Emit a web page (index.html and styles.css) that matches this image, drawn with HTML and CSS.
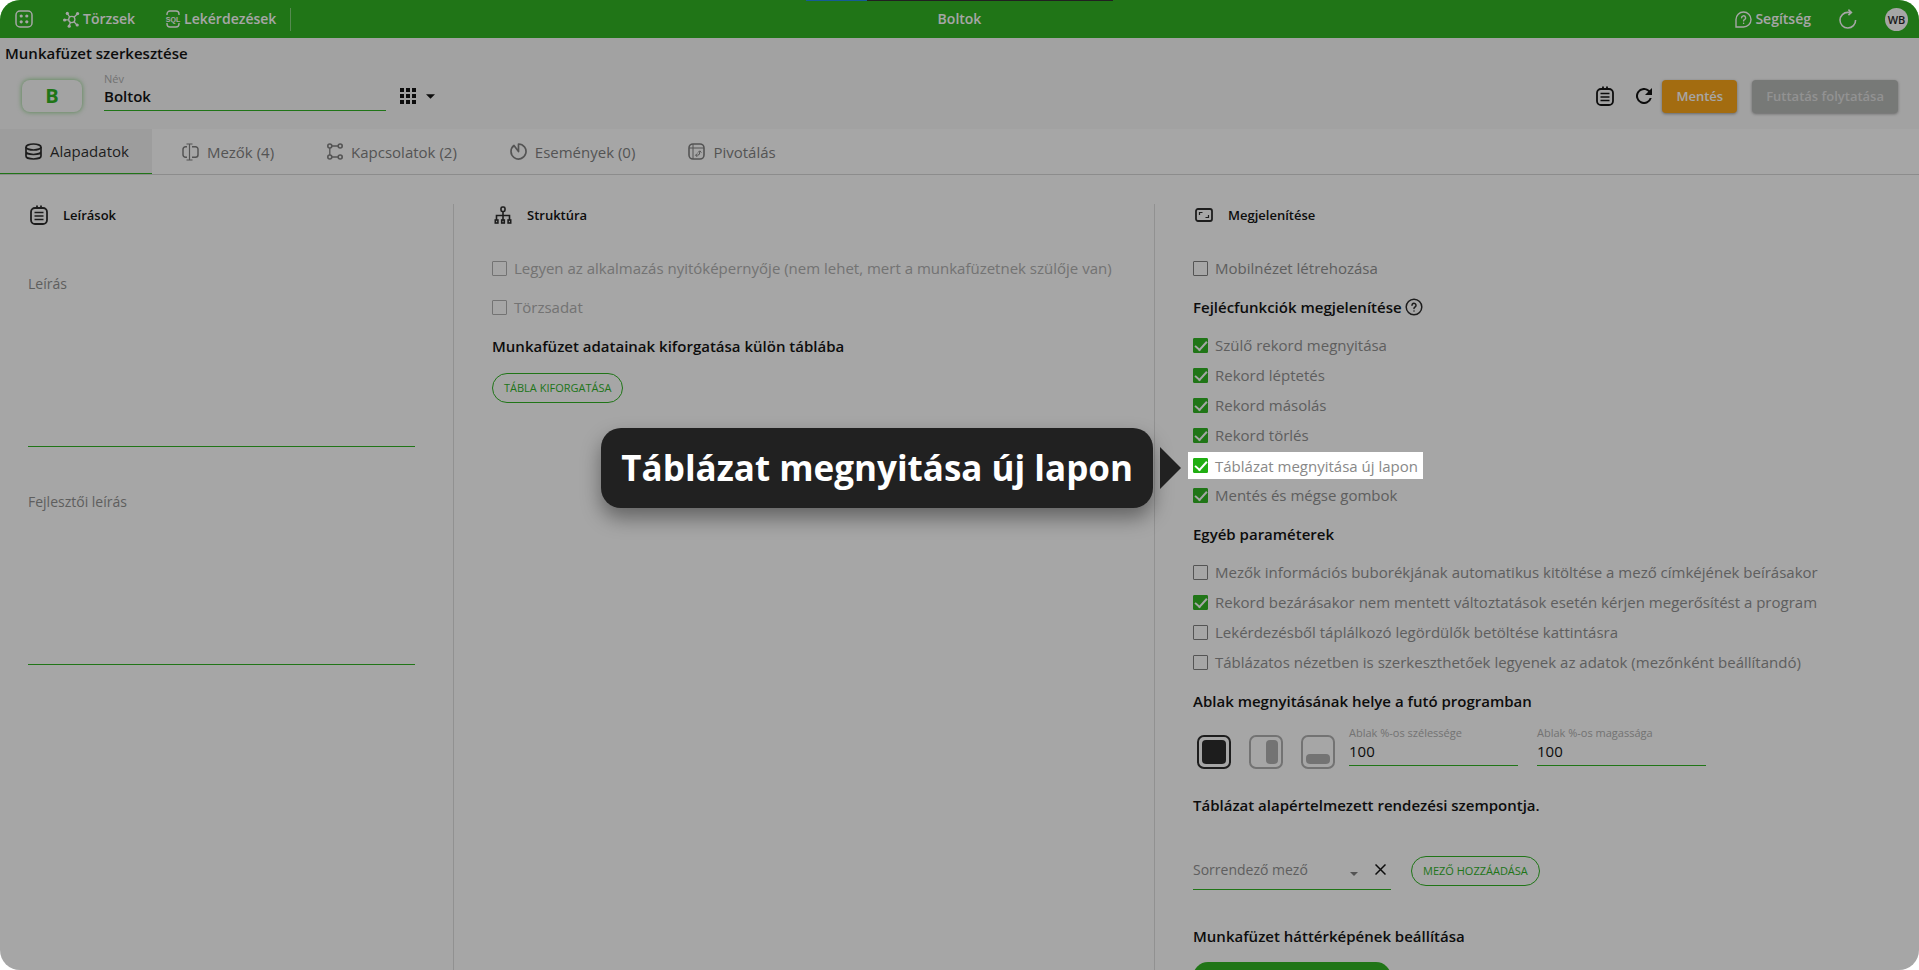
FILE: index.html
```html
<!DOCTYPE html>
<html lang="hu">
<head>
<meta charset="utf-8">
<title>Boltok</title>
<link rel="stylesheet" href="styles.css">
</head>
<body>
<div class="app">
  <header class="topbar">
    <nav class="topbar-nav">
      <a class="nav-link nav-apps" href="#" aria-label="Alkalmazások">
        <svg width="18" height="18" viewBox="0 0 18 18" fill="none" stroke="currentColor" stroke-width="1.5"><rect x="1" y="1" width="16" height="16" rx="4"/><g fill="currentColor" stroke="none"><circle cx="6.2" cy="6" r="1.6"/><circle cx="11.8" cy="6" r="1.6"/><circle cx="6.2" cy="11.8" r="1.6"/><circle cx="11.8" cy="11.8" r="1.6"/></g></svg>
      </a>
      <a class="nav-link nav-master" href="#">
        <svg width="17" height="17" viewBox="0 0 17 17" fill="none" stroke="currentColor" stroke-width="1.3"><circle cx="8.8" cy="8.5" r="3.1"/><path d="M11 6.2l3-3M11 10.8l2.6 2.8M7.5 11.3l-1.1 3M5.7 8.8H2M6.8 6.2L4.6 3"/><g fill="currentColor" stroke="none"><circle cx="14.6" cy="2.6" r="1.6"/><circle cx="14.2" cy="14" r="1.6"/><circle cx="6.2" cy="15.2" r="1.6"/><circle cx="1.6" cy="9" r="1.6"/><circle cx="4.3" cy="2.4" r="1.6"/></g></svg>
        Törzsek
      </a>
      <a class="nav-link nav-query" href="#">
        <svg width="16" height="18" viewBox="0 0 16 18" fill="none" stroke="currentColor" stroke-width="1.4"><path d="M2 5V4a3 3 0 0 1 3-3h6a3 3 0 0 1 3 3v1M2 13v1a3 3 0 0 0 3 3h6a3 3 0 0 0 3-3v-1"/><text class="svg-sql" x="8" y="11.6" text-anchor="middle">SQL</text></svg>
        Lekérdezések
      </a>
    </nav>
    <h1 class="topbar-title">Boltok</h1>
    <div class="topbar-tools">
      <a class="nav-link" href="#">
        <svg width="17" height="17" viewBox="0 0 17 17" fill="none" stroke="currentColor" stroke-width="1.4" stroke-linecap="round"><path d="M1 16V8.5A7.5 7.5 0 1 1 8.5 16Z"/><path d="M6.6 6.8a2 2 0 1 1 2.9 1.8q-.9.4-.9 1.3M8.6 12.3v.1"/></svg>
        Segítség
      </a>
      <button class="icon-button" type="button" aria-label="Frissítés">
        <svg width="18" height="20" viewBox="0 0 18 20" fill="none" stroke="currentColor" stroke-width="1.6"><path d="M16.6 11A7.8 7.8 0 1 1 9 3.400h3M9.400.6l3 2.800-3 2.800"/></svg>
      </button>
      <span class="avatar">WB</span>
    </div>
    <div class="progress"><span class="progress-bar"></span></div>
  </header>

  <section class="editor-head">
    <h2 class="editor-title">Munkafüzet szerkesztése</h2>
    <div class="editor-row">
      <span class="badge">B</span>
      <div class="field name-field">
        <label for="name">Név</label>
        <input id="name" type="text" value="Boltok">
      </div>
      <button class="icon-button grid-button" type="button" aria-label="Ikon választása">
        <svg width="16" height="16" viewBox="0 0 16 16" fill="currentColor"><path d="M0 0h4v4H0zM6 0h4v4H6zM12 0h4v4h-4zM0 6h4v4H0zM6 6h4v4H6zM12 6h4v4h-4zM0 12h4v4H0zM6 12h4v4H6zM12 12h4v4h-4z"/></svg>
        <svg width="9" height="5" viewBox="0 0 10 5" fill="currentColor"><path d="M0 0h10L5 5z"/></svg>
      </button>
      <div class="editor-actions">
        <button class="icon-button" type="button" aria-label="Napló">
          <svg width="18" height="20" viewBox="0 0 18 20" fill="none" stroke="currentColor" stroke-width="1.8"><rect x="1" y="3" width="16" height="16" rx="4"/><path d="M4.500 7.500h9M4.500 11h9M4.500 14.500h9" stroke-width="1.400"/><path d="M7 4V.6M11 4V.6"/></svg>
        </button>
        <button class="icon-button" type="button" aria-label="Újratöltés">
          <svg width="16" height="16" viewBox="0 0 16 16"><path fill="currentColor" d="M13.650 2.350A8 8 0 1 0 15.730 10h-2.080A6 6 0 1 1 8 2c1.660 0 3.140.69 4.220 1.780L9 7h7V0z"/></svg>
        </button>
        <button class="button save" type="button">Mentés</button>
        <button class="button resume" type="button" disabled>Futtatás folytatása</button>
      </div>
    </div>
  </section>

  <nav class="tabs">
    <a class="tab active" href="#">
      <svg width="17" height="17" viewBox="0 0 17 17" fill="none" stroke="currentColor" stroke-width="1.7"><ellipse cx="8.5" cy="4" rx="7.5" ry="3"/><path d="M1 4v9c0 1.700 3.400 3 7.500 3s7.500-1.300 7.500-3V4M1 8.500c0 1.700 3.400 3 7.500 3s7.500-1.300 7.500-3"/></svg>
      Alapadatok
    </a>
    <a class="tab" href="#">
      <svg width="17" height="18" viewBox="0 0 17 18" fill="none" stroke="currentColor" stroke-width="1.500"><path d="M5 3.800H3.500A2.500 2.500 0 0 0 1 6.300v5.400a2.500 2.500 0 0 0 2.500 2.500H5M10 3.800h3.500A2.500 2.500 0 0 1 16 6.300v5.400a2.500 2.500 0 0 1-2.500 2.500H10"/><path d="M7.500 1v16M4.500 1h6M4.500 17h6" stroke-width="1.200"/></svg>
      Mezők (4)
    </a>
    <a class="tab" href="#">
      <svg width="16" height="17" viewBox="0 0 16 17" fill="none" stroke="currentColor" stroke-width="1.600"><circle cx="2.800" cy="3" r="2"/><circle cx="13.200" cy="3" r="2"/><circle cx="2.800" cy="14" r="2"/><circle cx="13.200" cy="14" r="2"/><path d="M4.800 3h6.400M4.800 14h6.400M2.800 5v7" stroke-width="1.300"/></svg>
      Kapcsolatok (2)
    </a>
    <a class="tab" href="#">
      <svg width="17" height="17" viewBox="0 0 17 17" fill="none" stroke="currentColor" stroke-width="1.700" stroke-linejoin="round"><path d="M8.500 8.500V1A7.500 7.500 0 1 1 4 2.500Z"/></svg>
      Események (0)
    </a>
    <a class="tab" href="#">
      <svg width="17" height="17" viewBox="0 0 17 17" fill="none" stroke="currentColor" stroke-width="1.600"><rect x="1" y="1" width="15" height="15" rx="4"/><path d="M1 5h15M5 1v15M8 12.200h1.500q2.200 0 2.200-2.200V8.300M10 9.500l1.700-1.700 1.700 1.700M9.200 10.500l-1.700 1.700 1.700 1.700" stroke-width="1"/></svg>
      Pivotálás
    </a>
  </nav>

  <main class="columns">
    <section class="column column-text">
      <h3 class="column-title">
        <svg width="18" height="20" viewBox="0 0 18 20" fill="none" stroke="currentColor" stroke-width="1.800"><rect x="1" y="3" width="16" height="16" rx="4"/><path d="M4.500 7.500h9M4.500 11h9M4.500 14.500h9" stroke-width="1.500"/><path d="M7 4V.6M11 4V.6"/></svg>
        Leírások
      </h3>
      <div class="note">
        <label for="desc">Leírás</label>
        <textarea id="desc"></textarea>
      </div>
      <div class="note">
        <label for="devdesc">Fejlesztői leírás</label>
        <textarea id="devdesc"></textarea>
      </div>
    </section>

    <section class="column">
      <h3 class="column-title">
        <svg width="18" height="18" viewBox="0 0 18 18" fill="none" stroke="currentColor" stroke-width="1.600"><rect x="7" y="1" width="4" height="4.500" rx="1.500"/><path d="M9 5.500v9M2.500 14V9.500h13V14"/><rect x="1.300" y="14" width="2.600" height="3"/><rect x="7.700" y="14" width="2.600" height="3"/><rect x="14.100" y="14" width="2.600" height="3"/></svg>
        Struktúra
      </h3>
      <div class="group">
        <label class="check disabled"><input type="checkbox" disabled>Legyen az alkalmazás nyitóképernyője (nem lehet, mert a munkafüzetnek szülője van)</label>
      </div>
      <div class="group">
        <label class="check disabled"><input type="checkbox" disabled>Törzsadat</label>
      </div>
      <h4 class="group-title">Munkafüzet adatainak kiforgatása külön táblába</h4>
      <button class="pill" type="button">TÁBLA KIFORGATÁSA</button>
    </section>

    <section class="column column-view">
      <h3 class="column-title">
        <svg width="18" height="14" viewBox="0 0 18 14" fill="none" stroke="currentColor" stroke-width="1.800"><rect x="1" y="1" width="16" height="12" rx="2"/><path d="M4.500 7V4.500H7.500M13.500 7v2.500h-3" stroke-width="1.200"/></svg>
        Megjelenítése
      </h3>
      <div class="group">
        <label class="check"><input type="checkbox">Mobilnézet létrehozása</label>
      </div>
      <h4 class="group-title">Fejlécfunkciók megjelenítése
        <svg width="18" height="18" viewBox="0 0 18 18" fill="none" stroke="currentColor" stroke-width="1.500" stroke-linecap="round"><circle cx="9" cy="9" r="7.800"/><path d="M7 7.200a2 2 0 1 1 3 1.800q-1 .5-1 1.500M9 13v.1"/></svg>
      </h4>
      <div class="checks">
        <label class="check"><input type="checkbox" checked>Szülő rekord megnyitása</label>
        <label class="check"><input type="checkbox" checked>Rekord léptetés</label>
        <label class="check"><input type="checkbox" checked>Rekord másolás</label>
        <label class="check"><input type="checkbox" checked>Rekord törlés</label>
        <div class="spotlight">
          <label class="check"><input type="checkbox" checked>Táblázat megnyitása új lapon</label>
          <div class="callout" role="tooltip">Táblázat megnyitása új lapon</div>
        </div>
        <label class="check"><input type="checkbox" checked>Mentés és mégse gombok</label>
      </div>
      <h4 class="group-title">Egyéb paraméterek</h4>
      <div class="checks">
        <label class="check"><input type="checkbox">Mezők információs buborékjának automatikus kitöltése a mező címkéjének beírásakor</label>
        <label class="check"><input type="checkbox" checked>Rekord bezárásakor nem mentett változtatások esetén kérjen megerősítést a program</label>
        <label class="check"><input type="checkbox">Lekérdezésből táplálkozó legördülők betöltése kattintásra</label>
        <label class="check"><input type="checkbox">Táblázatos nézetben is szerkeszthetőek legyenek az adatok (mezőnként beállítandó)</label>
      </div>
      <h4 class="group-title">Ablak megnyitásának helye a futó programban</h4>
      <div class="window-row">
        <div class="window-modes">
          <button class="icon-button" type="button" aria-label="Teljes ablak">
            <svg width="34" height="34" viewBox="0 0 34 34"><rect x="1" y="1" width="32" height="32" rx="6" fill="none" stroke="currentColor" stroke-width="2"/><rect x="5" y="5" width="24" height="24" rx="4" fill="currentColor"/></svg>
          </button>
          <button class="icon-button muted" type="button" aria-label="Jobb oldali panel">
            <svg width="34" height="34" viewBox="0 0 34 34"><rect x="1" y="1" width="32" height="32" rx="6" fill="none" stroke="currentColor" stroke-width="2"/><rect x="17" y="5" width="12" height="24" rx="4" fill="currentColor"/></svg>
          </button>
          <button class="icon-button muted" type="button" aria-label="Alsó panel">
            <svg width="34" height="34" viewBox="0 0 34 34"><rect x="1" y="1" width="32" height="32" rx="6" fill="none" stroke="currentColor" stroke-width="2"/><rect x="5" y="19" width="24" height="10" rx="4" fill="currentColor"/></svg>
          </button>
        </div>
        <div class="field size-field">
          <label for="w">Ablak %-os szélessége</label>
          <input id="w" type="text" value="100">
        </div>
        <div class="field size-field">
          <label for="h">Ablak %-os magassága</label>
          <input id="h" type="text" value="100">
        </div>
      </div>
      <h4 class="group-title">Táblázat alapértelmezett rendezési szempontja.</h4>
      <div class="sort-row">
        <div class="sort-field">
          <select aria-label="Sorrendező mező"><option>Sorrendező mező</option></select>
          <svg class="caret" width="8" height="4" viewBox="0 0 8 4" fill="currentColor"><path d="M0 0h8L4 4z"/></svg>
          <button class="icon-button" type="button" aria-label="Törlés">
            <svg width="11" height="11" viewBox="0 0 11 11" fill="none" stroke="currentColor" stroke-width="1.500"><path d="M.5.5l10 10M10.500.5l-10 10"/></svg>
          </button>
        </div>
        <button class="pill" type="button">MEZŐ HOZZÁADÁSA</button>
      </div>
      <h4 class="group-title">Munkafüzet háttérképének beállítása</h4>
      <button class="upload" type="button" aria-label="Háttérkép feltöltése"></button>
    </section>
  </main>
</div>
</body>
</html>
```
FILE: styles.css
```css
:root {
  --green: #20ae12;
  --ink: #000;
  --icon: #1c1c1c;
  --text: #888;
  --line: #ddd;
  --font: "Open Sans", "Noto Sans", sans-serif;
}

* { box-sizing: border-box; }

body {
  margin: 0;
  background: #fff;
  font: 14px/20px var(--font);
  color: var(--ink);
}

h1, h2, h3, h4 { margin: 0; }
a { color: inherit; text-decoration: none; }
svg { flex: none; display: block; }
button, input, select, textarea { font: inherit; color: inherit; }

.app {
  height: 100vh;
  overflow: hidden;
  border-radius: 20px;
  background: #fff;
}

/* Top bar */
.topbar {
  position: relative;
  display: grid;
  grid-template-columns: 1fr auto 1fr;
  align-items: center;
  height: 38px;
  background: var(--green);
  color: #fff;
}
.topbar-nav { display: flex; align-items: center; padding-left: 15px; }
.nav-link {
  display: flex;
  align-items: center;
  gap: 3px;
  font-size: 14px;
  font-weight: 600;
}
.nav-master { margin-left: 30px; }
.nav-query {
  height: 23px;
  margin-left: 30px;
  padding-right: 14px;
  border-right: 1px solid #7bd071;
}
.svg-sql { font: 700 7px "Liberation Sans", sans-serif; fill: currentColor; stroke: none; }
.topbar-title { font-size: 14px; font-weight: 600; }
.topbar-tools {
  display: flex;
  align-items: center;
  justify-content: flex-end;
  gap: 28px;
  padding-right: 11px;
}
.avatar {
  width: 23px;
  border-radius: 50%;
  background: #fff;
  color: #111;
  font-size: 11px;
  font-weight: 600;
  line-height: 23px;
  text-align: center;
}
.progress {
  position: absolute;
  top: 0;
  left: 42%;
  width: 16%;
  height: 1px;
  background: #222;
}
.progress-bar { display: block; width: 20%; height: 1px; background: #1082e4; }

.icon-button {
  display: flex;
  align-items: center;
  padding: 0;
  border: 0;
  background: none;
}

/* Editor header */
.editor-head { padding: 5px 21px 0 22px; background: #f8f8f8; }
.editor-title { margin-left: -17px; font-size: 15px; font-weight: 600; }
.editor-row { display: flex; align-items: center; height: 66px; }
.badge {
  width: 60px;
  height: 32px;
  border-radius: 8px;
  background: #fafafa;
  box-shadow: 0 0 5px rgba(32, 174, 18, .6);
  color: var(--green);
  font-size: 20px;
  font-weight: 700;
  line-height: 32px;
  text-align: center;
}
.field { display: flex; flex-direction: column; border-bottom: 1px solid var(--green); }
.field label { color: #aaa; font-size: 11px; line-height: 14px; }
.field input { width: 100%; padding: 0; border: 0; background: none; outline: 0; }
.name-field { width: 282px; height: 39px; margin: 0 0 10px 22px; }
.name-field input { height: 20px; font-size: 15px; font-weight: 600; }
.grid-button { gap: 10px; margin-left: 14px; }
.editor-actions { display: flex; align-items: center; gap: 15px; margin-left: auto; }
.editor-actions .icon-button:first-child { margin-right: 7px; }
.editor-actions .save { margin-left: -5px; }
.button {
  height: 33px;
  padding: 0 14px;
  border: 0;
  border-radius: 4px;
  box-shadow: 0 1px 3px rgba(0, 0, 0, .4);
  color: #fff;
  font-size: 13px;
  font-weight: 600;
}
.save { background: #fb9e05; }
.resume { background: #b1b4b1; color: #dedede; }

/* Tabs */
.tabs { display: flex; height: 46px; border-bottom: 1px solid #d4d4d4; }
.tab {
  display: flex;
  align-items: center;
  gap: 8px;
  padding: 0 23px 0 30px;
  color: #777;
  font-size: 15px;
}
.tab.active {
  padding-left: 25px;
  background: #f1f1f1;
  border-bottom: 1px solid var(--green);
  color: var(--icon);
}

/* Columns */
.columns { display: grid; grid-template-columns: 453fr 701fr 765fr; padding-top: 29px; }
.column { min-height: calc(100vh - 204px); padding-left: 38px; }
.column + .column { border-left: 1px solid var(--line); }
.column-text { padding: 0 38px 0 28px; }
.column-title {
  display: flex;
  align-items: center;
  gap: 15px;
  height: 22px;
  margin-bottom: 27px;
  padding-left: 2px;
  font-size: 13px;
  font-weight: 600;
}
.column-title svg { color: var(--icon); }

.note {
  display: flex;
  flex-direction: column;
  height: 173px;
  margin: 45px 0;
  border-bottom: 1px solid var(--green);
  color: var(--text);
}
.column-text .column-title { margin-bottom: 48px; }
.note textarea { flex: 1; border: 0; outline: 0; resize: none; background: none; }

.group { display: flex; margin-bottom: 9px; }
.checks { display: flex; flex-direction: column; align-items: flex-start; margin: 8px 0 9px; }
.check {
  display: flex;
  align-items: center;
  gap: 7px;
  min-height: 30px;
  color: var(--text);
  font-size: 15px;
  white-space: nowrap;
}
.check input {
  appearance: none;
  flex: none;
  display: grid;
  place-items: center;
  width: 15px;
  height: 15px;
  margin: 0;
  border: 1px solid #777;
  border-radius: 1px;
}
.check input:checked { border-color: var(--green); background: var(--green); }
.check input:checked::before {
  content: "";
  width: 10px;
  height: 5px;
  border: solid #fff;
  border-width: 0 0 2px 2px;
  transform: translateY(-1px) rotate(-48deg);
}
.check.disabled { color: #aaa; }
.check.disabled input { border-color: #aaa; }

.group-title {
  display: flex;
  align-items: center;
  gap: 3px;
  min-height: 30px;
  font-size: 15px;
  font-weight: 600;
}
.group-title svg { color: var(--icon); }

.pill {
  height: 30px;
  margin-top: 12px;
  padding: 0 11px;
  border: 1px solid var(--green);
  border-radius: 15px;
  background: none;
  color: var(--green);
  font-size: 11px;
}

/* The dimmed backdrop is the shadow cast around the highlighted option. */
.spotlight {
  position: relative;
  z-index: 10;
  margin: 2px 0 1px -5px;
  padding: 0 5px;
  background: #fff;
  box-shadow: 0 0 0 3000px rgba(33, 33, 33, .4);
}
.spotlight .check { min-height: 27px; }
.callout {
  position: absolute;
  top: -24px;
  right: calc(100% + 35px);
  padding: 0 20px;
  border-radius: 20px;
  background: #212121;
  box-shadow: 0 10px 20px rgba(0, 0, 0, .4);
  color: #fff;
  font-size: 35px;
  font-weight: 700;
  line-height: 80px;
  white-space: nowrap;
}
.callout::after {
  content: "";
  position: absolute;
  top: 19px;
  left: calc(100% + 7px);
  border: solid transparent;
  border-width: 21px 0 21px 21px;
  border-left-color: #212121;
}

/* Window placement */
.window-row { display: flex; align-items: flex-end; gap: 19px; height: 54px; margin-bottom: 20px; padding-bottom: 1px; }
.window-modes { display: flex; gap: 18px; margin: 0 -5px 0 4px; color: var(--icon); }
.window-modes .muted { color: #aaa; }
.size-field { width: 169px; margin-bottom: 3px; }
.size-field input { height: 25px; padding-bottom: 4px; font-size: 15px; }

.sort-row { display: flex; align-items: flex-start; gap: 20px; margin: 24px 0 31px; }
.sort-field {
  display: flex;
  align-items: center;
  width: 198px;
  height: 46px;
  padding-top: 6px;
  padding-right: 5px;
  border-bottom: 1px solid var(--green);
}
.sort-field select { flex: 1; min-width: 0; padding: 0; border: 0; background: none; appearance: none; color: var(--text); }
.caret { margin: 8px 17px 0 0; color: #777; }
.upload {
  display: block;
  width: 198px;
  height: 30px;
  margin-top: 11px;
  border: 0;
  border-radius: 15px;
  background: var(--green);
}
```
